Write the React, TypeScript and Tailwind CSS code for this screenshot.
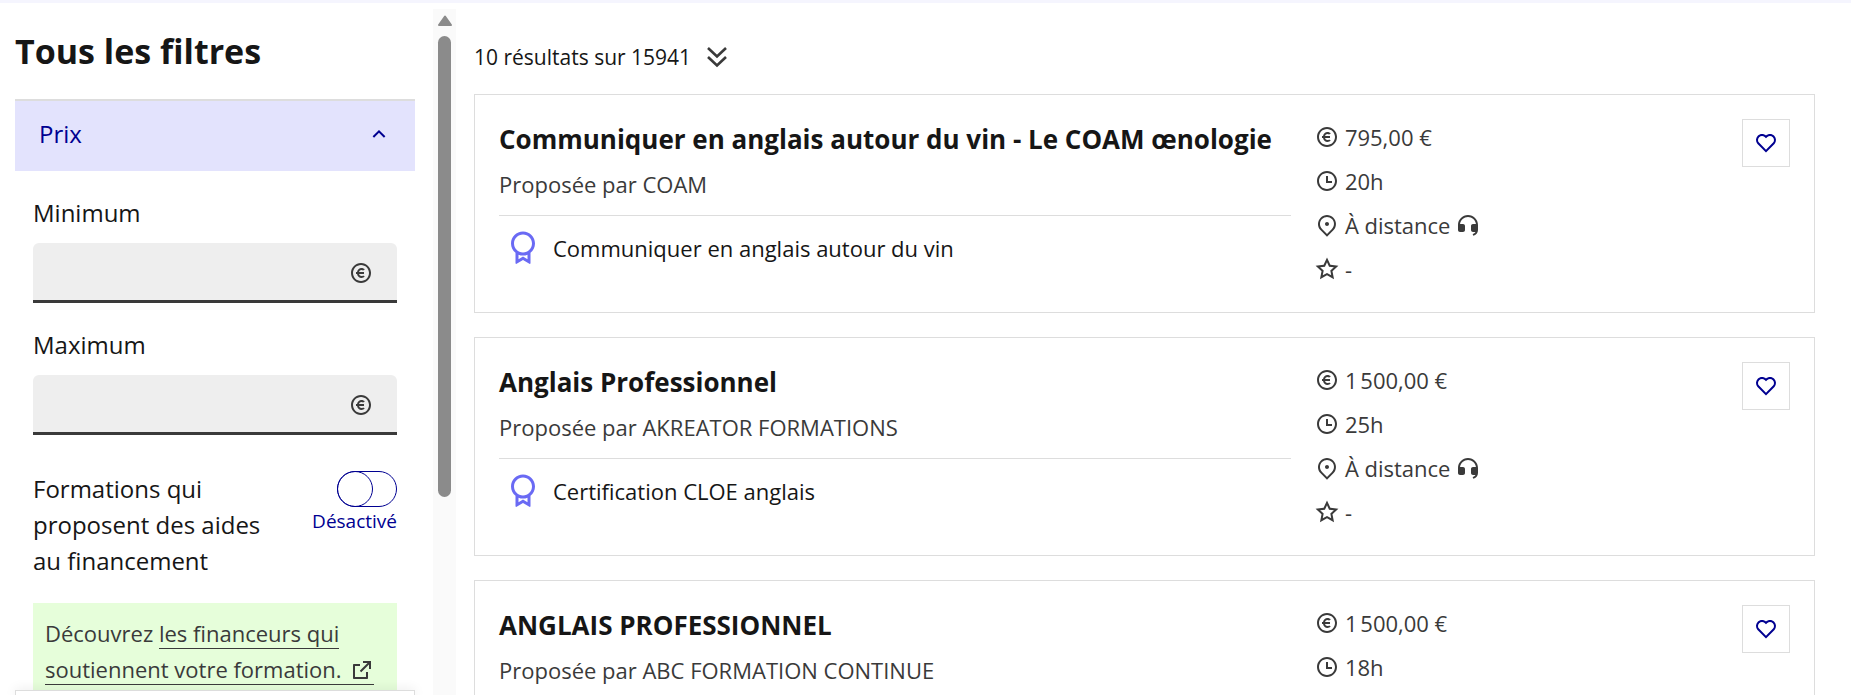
import type { ReactNode } from "react";
import {
  RiArrowUpSLine,
  RiAwardLine,
  RiCustomerServiceFill,
  RiExternalLinkLine,
  RiHeartLine,
  RiMapPin2Line,
  RiMoneyEuroCircleLine,
  RiStarLine,
  RiTimeLine,
} from "react-icons/ri";

type Formation = {
  id: number;
  title: string;
  provider: string;
  certification: string;
  price: string;
  duration: string;
};

// Thousands are grouped with a narrow no-break space, as fr-FR formatting does.
const FORMATIONS: Formation[] = [
  {
    id: 1,
    title: "Communiquer en anglais autour du vin - Le COAM œnologie",
    provider: "COAM",
    certification: "Communiquer en anglais autour du vin",
    price: "795,00 €",
    duration: "20h",
  },
  {
    id: 2,
    title: "Anglais Professionnel",
    provider: "AKREATOR FORMATIONS",
    certification: "Certification CLOE anglais",
    price: "1\u202f500,00 €",
    duration: "25h",
  },
  {
    id: 3,
    title: "ANGLAIS PROFESSIONNEL",
    provider: "ABC FORMATION CONTINUE",
    certification: "Certification CLOE anglais",
    price: "1\u202f500,00 €",
    duration: "18h",
  },
];

function PriceField({ id, label }: { id: string; label: string }) {
  return (
    <div>
      <label htmlFor={id} className="block text-2xl leading-9 text-[#161616]">
        {label}
      </label>
      <div className="mt-3 flex h-[60px] items-center rounded-t-md border-b-3 border-[#3a3a3a] bg-[#eee] pt-0.5 pr-6">
        <input id={id} type="text" inputMode="numeric" className="h-full min-w-0 flex-1 bg-transparent px-6 text-2xl outline-none" />
        <RiMoneyEuroCircleLine className="size-6 text-[#3a3a3a]" aria-hidden="true" />
      </div>
    </div>
  );
}

function MetaRow({ icon, children }: { icon: ReactNode; children: ReactNode }) {
  return (
    <li className="flex h-9 items-center gap-1.5 text-[22px] text-[#3a3a3a]">
      {icon}
      {children}
    </li>
  );
}

function FormationCard({ formation }: { formation: Formation }) {
  return (
    <article className="grid grid-cols-[5fr_3fr] gap-6 border border-[#ddd] px-6 pt-6 pb-[25px]">
      <div className="min-w-0">
        <h2 className="text-[26px] leading-10 font-bold whitespace-nowrap text-[#161616]">{formation.title}</h2>
        <p className="mt-[9px] text-[22px] leading-8 text-[#3a3a3a]">Proposée par {formation.provider}</p>
        <div className="mt-[15px] flex items-center gap-3 border-t border-[#ddd] pt-3.5 pl-1.5">
          <RiAwardLine className="size-9 shrink-0 text-[#6a6af4]" aria-hidden="true" />
          <p className="text-[22px] leading-8 text-[#161616]">{formation.certification}</p>
        </div>
      </div>
      <div className="flex items-start justify-between">
        <ul className="flex flex-col gap-2">
          <MetaRow icon={<RiMoneyEuroCircleLine className="size-6" />}>{formation.price}</MetaRow>
          <MetaRow icon={<RiTimeLine className="size-6" />}>{formation.duration}</MetaRow>
          <MetaRow icon={<RiMapPin2Line className="size-6" />}>
            À distance
            <RiCustomerServiceFill className="size-6" />
          </MetaRow>
          <MetaRow icon={<RiStarLine className="size-6" />}>-</MetaRow>
        </ul>
        <button
          type="button"
          aria-label={`Ajouter ${formation.title} aux favoris`}
          className="flex size-12 items-center justify-center border border-[#ddd] text-[#000091]"
        >
          <RiHeartLine className="size-6" />
        </button>
      </div>
    </article>
  );
}

function Filters() {
  return (
    <aside className="flex w-[400px] shrink-0 flex-col">
      <div className="min-h-0 flex-1 overflow-hidden">
        <h1 className="pt-6 text-[34px] leading-12 font-bold text-[#161616]">Tous les filtres</h1>
        <button
          type="button"
          aria-expanded="true"
          className="mt-6 flex h-[72px] w-full items-center justify-between border-t-2 border-[#ddd] bg-[#e3e3fd] px-6 pb-1 text-2xl font-medium text-[#000091]"
        >
          Prix
          <RiArrowUpSLine className="size-6" aria-hidden="true" />
        </button>

        <div className="flex flex-col gap-6 px-[18px] pt-6">
          <PriceField id="price-min" label="Minimum" />
          <PriceField id="price-max" label="Maximum" />

          <label className="mt-3 flex items-start justify-between gap-6 text-2xl leading-9 text-[#161616]">
            <span className="flex-1">Formations qui proposent des aides au financement</span>
            <span className="flex flex-col items-end">
              <input type="checkbox" role="switch" className="peer sr-only" />
              <span className="flex h-9 w-[60px] rounded-full border border-[#000091]">
                <span className="-my-px -ml-px size-9 rounded-full border border-[#000091]" />
              </span>
              <span className="text-[19px] leading-7 text-[#000091]">Désactivé</span>
            </span>
          </label>

          <p className="bg-[#e6feda] p-3 text-[22px] leading-9 text-[#3a3a3a]">
            Découvrez{" "}
            <a href="#financeurs" className="border-b border-[#3a3a3a]">
              les financeurs qui soutiennent votre formation.
              <RiExternalLinkLine className="ml-2 inline size-6 align-[-4px]" aria-hidden="true" />
            </a>
          </p>
        </div>
      </div>
      {/* sticky action bar, only its top edge is in view */}
      <div className="z-10 h-[5px] border border-b-0 border-[#ddd] bg-white shadow-[0_0_12px_rgba(0,0,0,0.12)]" />
    </aside>
  );
}

function ScrollTrack() {
  return (
    <div className="mx-[18px] mt-1.5 flex w-[23px] shrink-0 flex-col items-center bg-[#fafafa] pt-1.5" aria-hidden="true">
      <svg className="h-3 w-4 shrink-0" viewBox="0 0 16 12">
        <path d="M8 1.5 14 10H2z" fill="#8b8b8b" stroke="#8b8b8b" strokeWidth="2" strokeLinejoin="round" />
      </svg>
      <div className="mt-[9px] w-[13px] flex-[7] rounded-full bg-[#8b8b8b]" />
      <div className="flex-[3]" />
    </div>
  );
}

export default function App() {
  return (
    <div className="flex h-screen flex-col overflow-hidden border-t-3 border-[#f5f5fe] bg-white font-['Open_Sans',sans-serif]">
      <div className="flex min-h-0 flex-1 pl-[15px]">
        <Filters />
        <ScrollTrack />
        <main className="min-w-0 flex-1 overflow-hidden pr-9">
          <div className="flex items-center gap-3.5 pt-9 pb-[19px] text-[21px] leading-9 text-[#161616]">
            <p>10 résultats sur 15941</p>
            <button type="button" aria-label="Aller en bas de la liste" className="text-[#3a3a3a]">
              <svg className="size-6" viewBox="0 0 24 24" fill="none" stroke="currentColor" strokeWidth="2.6">
                <path d="M3 3l9 8.5L21 3M3 12l9 8.5 9-8.5" />
              </svg>
            </button>
          </div>
          <div className="flex flex-col gap-6">
            {FORMATIONS.map((formation) => (
              <FormationCard key={formation.id} formation={formation} />
            ))}
          </div>
        </main>
      </div>
    </div>
  );
}
